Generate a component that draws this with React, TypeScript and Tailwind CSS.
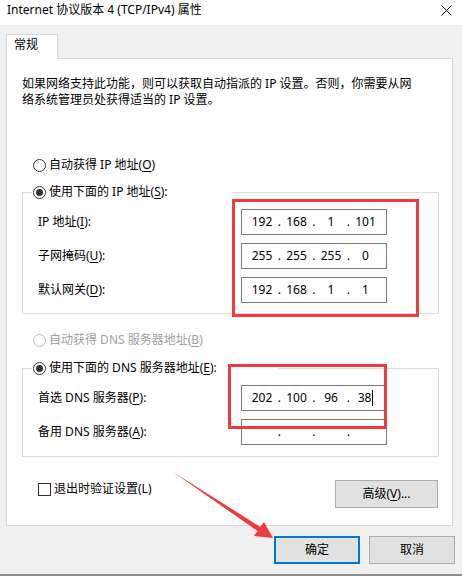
import { Fragment, ReactNode } from 'react';
import clsx from 'clsx';

interface RadioProps {
  checked?: boolean;
  disabled?: boolean;
}

function Radio({ checked, disabled }: RadioProps) {
  return (
    <span
      className={clsx(
        'flex h-[13px] w-[13px] shrink-0 items-center justify-center rounded-full border bg-white',
        disabled ? 'border-[#bcbcbc]' : 'border-[#333333]'
      )}
    >
      {checked && <span className="h-[7px] w-[7px] rounded-full bg-[#333333]" />}
    </span>
  );
}

interface IpFieldProps {
  parts: string[];
  caret?: boolean;
}

function IpField({ parts, caret }: IpFieldProps) {
  return (
    <div className="flex h-[26px] w-[146px] items-center border border-[#7a7a7a] bg-white pl-[5.5px]">
      {parts.map((part, i) => (
        <Fragment key={i}>
          {i > 0 && <span className="w-[5.5px] text-center">.</span>}
          <span className="flex w-[29px] items-center justify-center">
            {part}
            {caret && i === parts.length - 1 && <span className="ml-px h-[16px] w-px bg-black" />}
          </span>
        </Fragment>
      ))}
    </div>
  );
}

function Mn({ children }: { children: ReactNode }) {
  return <u className="underline-offset-[2px]">{children}</u>;
}

interface FieldRowProps {
  label: ReactNode;
  parts: string[];
  caret?: boolean;
}

function FieldRow({ label, parts, caret }: FieldRowProps) {
  return (
    <div className="flex items-center">
      <span className="w-[203px]">{label}</span>
      <IpField parts={parts} caret={caret} />
    </div>
  );
}

export default function App() {
  return (
    <div className="relative flex h-[576px] w-[462px] flex-col overflow-hidden bg-[#f0f0f0] font-['Noto_Sans','Noto_Sans_CJK_SC',sans-serif] text-[12px] leading-[16px] text-black">
      {/* title bar */}
      <div className="flex h-[25px] shrink-0 items-start justify-between bg-white pl-[7px] pr-[10px] pt-[2px]">
        <span>Internet 协议版本 4 (TCP/IPv4) 属性</span>
        <svg width="11" height="11" viewBox="0 0 11 11" className="mt-[3px]">
          <path d="M0.5 0.5 L10.5 10.5 M10.5 0.5 L0.5 10.5" stroke="#111" strokeWidth="1" />
        </svg>
      </div>

      {/* tab */}
      <div className="relative z-10 -mb-px ml-[6px] mt-[9px] h-[25px] w-[52px] border border-b-0 border-[#d9d9d9] bg-white pl-[7px] pt-[2px]">
        常规
      </div>

      {/* panel */}
      <div className="ml-[6px] flex h-[468px] w-[447px] flex-col border border-[#d9d9d9] bg-white">
        <p className="pl-[15px] pt-[17px]">
          如果网络支持此功能，则可以获取自动指派的 IP 设置。否则，你需要从网
          <br />
          络系统管理员处获得适当的 IP 设置。
        </p>

        <div className="ml-[26px] mt-[49px] flex h-[16px] items-center gap-[3px]">
          <Radio />
          <span>
            自动获得 IP 地址(<Mn>O</Mn>)
          </span>
        </div>

        <fieldset className="ml-[15px] mt-[11px] w-[417px] border border-[#dcdcdc] pb-[10px] pl-[15px] pt-[9px]">
          <legend className="-ml-[6px] flex h-[16px] w-[200px] items-center gap-[3px] whitespace-nowrap pl-px">
            <Radio checked />
            <span>
              使用下面的 IP 地址(<Mn>S</Mn>):
            </span>
          </legend>
          <div className="flex flex-col gap-[8px]">
            <FieldRow
              label={
                <>
                  IP 地址(<Mn>I</Mn>):
                </>
              }
              parts={['192', '168', '1', '101']}
            />
            <FieldRow
              label={
                <>
                  子网掩码(<Mn>U</Mn>):
                </>
              }
              parts={['255', '255', '255', '0']}
            />
            <FieldRow
              label={
                <>
                  默认网关(<Mn>D</Mn>):
                </>
              }
              parts={['192', '168', '1', '1']}
            />
          </div>
        </fieldset>

        <div className="ml-[26px] mt-[18px] flex h-[16px] items-center gap-[3px] text-[#a0a0a0]">
          <Radio disabled />
          <span>
            自动获得 DNS 服务器地址(<Mn>B</Mn>)
          </span>
        </div>

        <fieldset className="ml-[15px] mt-[12px] w-[417px] border border-[#dcdcdc] pb-[11px] pl-[15px] pt-[9px]">
          <legend className="-ml-[6px] flex h-[16px] w-[247px] items-center gap-[3px] whitespace-nowrap pl-px">
            <Radio checked />
            <span>
              使用下面的 DNS 服务器地址(<Mn>E</Mn>):
            </span>
          </legend>
          <div className="flex flex-col gap-[8px]">
            <FieldRow
              label={
                <>
                  首选 DNS 服务器(<Mn>P</Mn>):
                </>
              }
              parts={['202', '100', '96', '38']}
              caret
            />
            <FieldRow
              label={
                <>
                  备用 DNS 服务器(<Mn>A</Mn>):
                </>
              }
              parts={['', '', '', '']}
            />
          </div>
        </fieldset>

        <div className="mt-[23px] flex items-start justify-between pl-[31px] pr-[14px]">
          <div className="mt-[1px] flex h-[16px] items-center gap-[3px]">
            <span className="h-[13px] w-[13px] border border-[#333333] bg-white" />
            <span>退出时验证设置(L)</span>
          </div>
          <button className="h-[28px] w-[103px] border border-[#adadad] bg-[#e1e1e1]">高级(<Mn>V</Mn>)...</button>
        </div>
      </div>

      {/* dialog buttons */}
      <div className="mt-[10px] flex justify-end gap-[9px] pr-[7px]">
        <button className="h-[28px] w-[86px] border-2 border-[#0078d7] bg-[#e1e1e1]">确定</button>
        <button className="h-[28px] w-[86px] border border-[#adadad] bg-[#e1e1e1]">取消</button>
      </div>

      <div className="mt-[10px] h-[2px] bg-[#8c8c8c]" />

      {/* red annotations */}
      <div className="absolute left-[232px] top-[199px] h-[118px] w-[187px] border-[3px] border-[#ef3b3b]" />
      <div className="absolute left-[228px] top-[364px] h-[65px] w-[159px] border-[3px] border-[#ef3b3b]" />
      <svg className="pointer-events-none absolute left-0 top-0" width="462" height="576" viewBox="0 0 462 576">
        <polygon
          points="173,472 260.4,526.9 264,522 273,538 254,536 257.6,531.1"
          fill="#ef3b3b"
        />
      </svg>
    </div>
  );
}
